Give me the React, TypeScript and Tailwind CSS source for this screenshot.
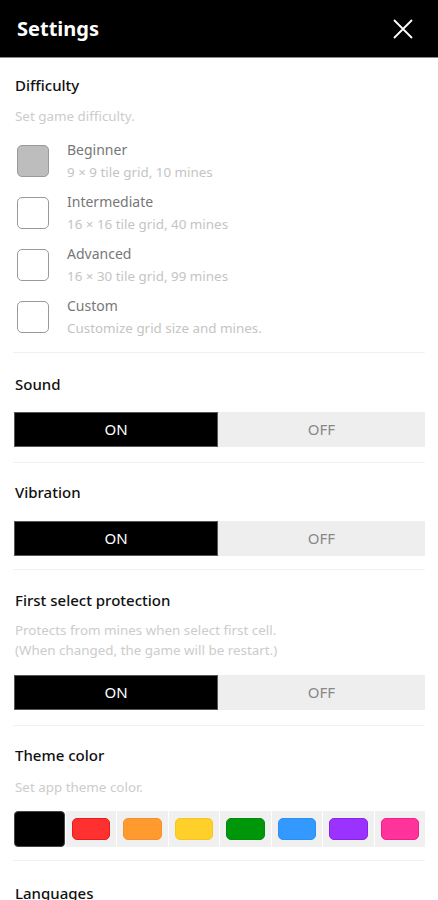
import React from 'react';

const font = { fontFamily: '"Noto Sans", "Open Sans", sans-serif' };

const levels = [
  { name: 'Beginner', desc: '9 × 9 tile grid, 10 mines', checked: true },
  { name: 'Intermediate', desc: '16 × 16 tile grid, 40 mines', checked: false },
  { name: 'Advanced', desc: '16 × 30 tile grid, 99 mines', checked: false },
  { name: 'Custom', desc: 'Customize grid size and mines.', checked: false },
];

const colors = [
  { bg: 'bg-black', border: 'border-black' },
  { bg: 'bg-[#ff3030]', border: 'border-[#e61e1e]' },
  { bg: 'bg-[#ff9a2e]', border: 'border-[#f5902a]' },
  { bg: 'bg-[#ffd02a]', border: 'border-[#f5c620]' },
  { bg: 'bg-[#00960a]', border: 'border-[#008c08]' },
  { bg: 'bg-[#3399ff]', border: 'border-[#2b90f5]' },
  { bg: 'bg-[#9a33ff]', border: 'border-[#8a22ee]' },
  { bg: 'bg-[#ff3399]', border: 'border-[#f0208a]' },
];

function Toggle() {
  return (
    <div className="flex h-[35px] ml-[14px] mr-[13px]">
      <div className="w-[204px] bg-black border border-[#555] flex items-center justify-center text-white text-[15px]">ON</div>
      <div className="flex-1 bg-[#eeeeee] flex items-center justify-center text-[#888] text-[15px]">OFF</div>
    </div>
  );
}

function Divider() {
  return <div className="mx-[13px] h-px bg-[#f1f1f1]" />;
}

export default function App() {
  return (
    <div className="w-[438px] h-[900px] bg-white overflow-hidden" style={font}>
      {/* Header */}
      <div className="h-[58px] bg-black border-b border-[#8a8a8a] flex items-center justify-between pl-[17px] pr-[25px]">
        <h1 className="text-white font-bold text-[20px] leading-none">Settings</h1>
        <svg width="20" height="20" viewBox="0 0 20 20">
          <path d="M1 1 L19 19 M19 1 L1 19" stroke="white" strokeWidth="1.8" />
        </svg>
      </div>

      {/* Difficulty */}
      <div className="pt-[17px] pb-[9px]">
        <h2 className="px-[15px] text-[15px] leading-[20px] font-medium text-[#111]">Difficulty</h2>
        <p className="px-[15px] mt-[11px] text-[13.4px] leading-[20px] text-[#cccccc]">Set game difficulty.</p>
        <div className="mt-[9px]">
          {levels.map((l) => (
            <div key={l.name} className="flex items-center h-[52px] px-[17px]">
              <div
                className={`w-[32px] h-[32px] rounded-[5px] border-[1.5px] border-[#999] ${l.checked ? 'bg-[#bdbdbd]' : 'bg-white'}`}
              />
              <div className="ml-[18px] -mt-[2px]">
                <div className="text-[14px] leading-[20px] text-[#777]">{l.name}</div>
                <div className="text-[13.4px] leading-[18px] text-[#c4c4c4] mt-[3px]">{l.desc}</div>
              </div>
            </div>
          ))}
        </div>
      </div>
      <Divider />

      {/* Sound */}
      <div className="pt-[21px] pb-[15px]">
        <h2 className="px-[15px] text-[15px] leading-[20px] font-medium text-[#111] mb-[18px]">Sound</h2>
        <Toggle />
      </div>
      <Divider />

      {/* Vibration */}
      <div className="pt-[19px] pb-[13px]">
        <h2 className="px-[15px] text-[15px] leading-[20px] font-medium text-[#111] mb-[19px]">Vibration</h2>
        <Toggle />
      </div>
      <Divider />

      {/* First select protection */}
      <div className="pt-[20px] pb-[15px]">
        <h2 className="px-[15px] text-[15px] leading-[20px] font-medium text-[#111]">First select protection</h2>
        <p className="px-[15px] mt-[10px] text-[13.4px] leading-[20px] text-[#cccccc]">
          Protects from mines when select first cell.
          <br />
          (When changed, the game will be restart.)
        </p>
        <div className="mt-[15px]">
          <Toggle />
        </div>
      </div>
      <Divider />

      {/* Theme color */}
      <div className="pt-[19px] pb-[13px]">
        <h2 className="px-[15px] text-[15px] leading-[20px] font-medium text-[#111]">Theme color</h2>
        <p className="px-[15px] mt-[12px] text-[13.4px] leading-[20px] text-[#cccccc]">Set app theme color.</p>
        <div className="mt-[14px] ml-[14px] mr-[13px] grid grid-cols-8 gap-px h-[36px]">
          {colors.map((c, i) =>
            i === 0 ? (
              <div key={i} className="bg-black rounded-[4px] border border-[#444]" />
            ) : (
              <div key={i} className="bg-[#f0f0f0] px-[6px] py-[7px]">
                <div className={`w-full h-full rounded-[5px] border ${c.bg} ${c.border}`} />
              </div>
            )
          )}
        </div>
      </div>
      <Divider />

      {/* Languages */}
      <div className="pt-[22px]">
        <h2 className="px-[15px] text-[15px] leading-[20px] font-medium text-[#111]">Languages</h2>
      </div>
    </div>
  );
}
